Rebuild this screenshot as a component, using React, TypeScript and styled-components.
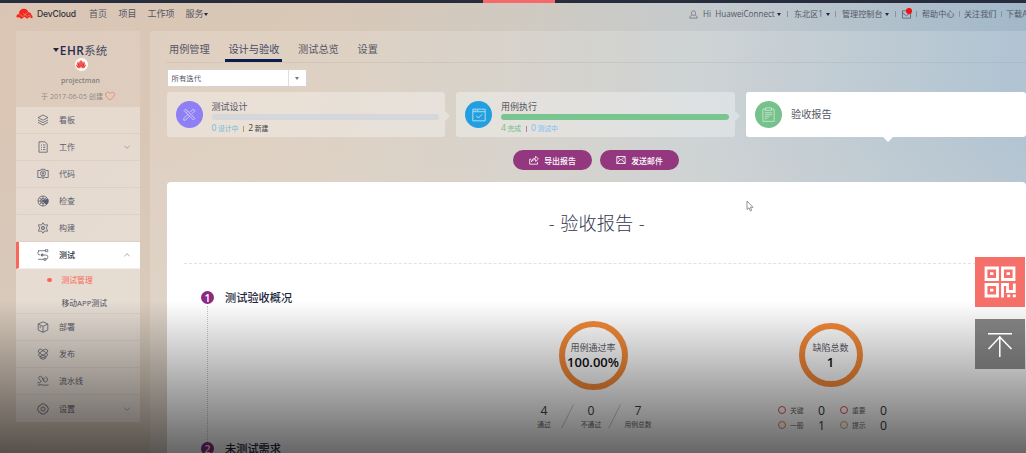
import React from "react";
import styled, { createGlobalStyle } from "styled-components";

const Global = createGlobalStyle`
  *, *::before, *::after { box-sizing: border-box; }
  html, body { margin: 0; height: 100%; overflow: hidden; }
  body { font-family: "Open Sans", "Noto Sans CJK SC", sans-serif; color: #555765; }
`;

const Page = styled.div`
  position: relative;
  width: 1026px;
  height: 453px;
  overflow: hidden;
  background:
    linear-gradient(to bottom, rgba(214, 206, 190, 0) 25%, rgba(214, 206, 196, 0.5) 75%),
    linear-gradient(97deg, #dac5b4 0%, #d9c8b6 28%, #cfcac2 50%, #c4cacd 66%, #aebfcb 84%, #9cb5c9 100%);
`;
const Stripe = styled.div`
  height: 3px;
  background: #282d3d;
  padding-left: 483px;
`;
const StripeMark = styled.div`
  width: 72px;
  height: 3px;
  background: #f5696a;
`;
const Header = styled.header`
  display: flex;
  justify-content: space-between;
  height: 28px;
  padding: 0 0 6px 16px;
  font-size: 9px;
  white-space: nowrap;
`;
const Group = styled.div`
  display: flex;
  align-items: center;
  flex: none;
`;
const Cell = styled.div<{ $w: number; $pl?: number }>`
  display: flex;
  align-items: center;
  flex: none;
  width: ${(p) => p.$w}px;
  padding-left: ${(p) => p.$pl ?? 0}px;
  line-height: 14px;
`;
const Brand = styled(Cell)`
  font-family: Inter, sans-serif;
  font-size: 8.6px;
  font-weight: 500;
  color: #33313a;
  letter-spacing: -0.15px;
`;
const RightGroup = styled(Group)`
  width: 337px;
  font-size: 8.1px;
  overflow: hidden;
`;
const Caret = styled.i<{ $s?: number; $ml?: number; $c?: string }>`
  display: inline-block;
  flex: none;
  margin-left: ${(p) => p.$ml ?? 0}px;
  border: ${(p) => p.$s ?? 2}px solid transparent;
  border-top: ${(p) => (p.$s ?? 2) * 1.6}px solid ${(p) => p.$c ?? "#25283a"};
  border-bottom: 0;
`;
const Bar = styled.i`
  flex: none;
  width: 1px;
  height: 6px;
  background: #8b9299;
`;
const MailCell = styled(Cell)`
  position: relative;
  &::after {
    content: "";
    position: absolute;
    right: 1px;
    top: -1px;
    width: 6px;
    height: 6px;
    border-radius: 50%;
    background: #fb0d0d;
  }
`;

const Body = styled.div`
  display: flex;
  gap: 10px;
  height: 422px;
  padding-left: 16px;
`;
const Side = styled.aside`
  flex: none;
  align-self: flex-start;
  width: 124px;
  background: rgba(255, 255, 255, 0.13);
`;
const Project = styled.div`
  display: flex;
  flex-direction: column;
  align-items: center;
  height: 75.5px;
  padding-top: 11px;
`;
const ProjectName = styled.div`
  display: flex;
  align-items: center;
  gap: 1px;
  height: 16px;
  padding-left: 4px;
  font-size: 11.4px;
  line-height: 16px;
  color: #454a68;
  b { letter-spacing: 0.5px; font-weight: 600; font-size: 11.8px; color: #262c52; }
`;
const Avatar = styled.div`
  display: flex;
  align-items: center;
  justify-content: center;
  margin-left: 6px;
  width: 13px;
  height: 13px;
  border-radius: 50%;
  background: #fff;
`;
const Owner = styled.div`
  margin: 4px 0 0 5px;
  font-size: 7px;
  font-weight: 600;
  line-height: 12px;
  color: #85807e;
`;
const Created = styled.div`
  display: flex;
  align-items: center;
  gap: 2px;
  margin-top: 3px;
  font-size: 7.1px;
  line-height: 12px;
  color: #8f8986;
`;
const MenuItem = styled.div<{ $active?: boolean; $last?: boolean }>`
  display: flex;
  align-items: center;
  height: 27px;
  padding: 0 9px 0 ${(p) => (p.$active ? 18 : 21)}px;
  border-left: ${(p) => (p.$active ? "3px solid #fb6658" : "0")};
  border-bottom: ${(p) => (p.$last ? "0" : "1px solid rgba(160,140,130,0.13)")};
  background: ${(p) => (p.$active ? "#fff" : "rgba(255,255,255,0.25)")};
  color: ${(p) => (p.$active ? "#2b2e44" : "#5b5d6e")};
  font-size: 8px;
  font-weight: ${(p) => (p.$active ? 500 : 400)};
`;
const MenuLabel = styled.span`
  flex: 1;
  margin-left: 10px;
  line-height: 14px;
`;
const SubMenu = styled.div`
  height: 45.5px;
  background: rgba(255, 255, 255, 0.25);
  border-bottom: 1px solid rgba(160, 140, 130, 0.13);
`;
const SubItem = styled.div<{ $on?: boolean }>`
  display: flex;
  align-items: center;
  height: 22.5px;
  padding-left: 31px;
  gap: 10px;
  font-size: 7.8px;
  color: ${(p) => (p.$on ? "#fb6658" : "#4d4e5d")};
  &::before {
    content: "";
    width: 4.5px;
    height: 4.5px;
    border-radius: 50%;
    background: ${(p) => (p.$on ? "#fb6658" : "transparent")};
  }
`;

const Main = styled.main`
  flex: 1;
  min-width: 0;
  padding-left: 16.5px;
  border-radius: 4px 0 0 0;
  background: rgba(255, 255, 255, 0.17);
`;
const Tabs = styled.div`
  display: flex;
  gap: 12.7px;
  height: 32px;
  margin-left: -0.5px;
  padding: 7px 0 0;
  border-bottom: 1px solid rgba(130, 120, 120, 0.13);
`;
const Tab = styled.div<{ $on?: boolean }>`
  height: 24px;
  padding: 0 3px;
  border-bottom: ${(p) => (p.$on ? "3px solid #0c1c4e" : "0")};
  font-size: 10.2px;
  line-height: 22px;
  color: ${(p) => (p.$on ? "#434965" : "#555765")};
`;
const Select = styled.div`
  display: flex;
  width: 140px;
  height: 18px;
  margin-top: 6px;
  border: 1px solid #d8d3ce;
  background: #fff;
  font-size: 7.4px;
  line-height: 17px;
  color: #55565f;
  padding-left: 4px;
`;
const SelectArrow = styled.div`
  display: flex;
  align-items: center;
  justify-content: center;
  width: 18px;
  margin-left: auto;
  border-left: 1px solid #dedede;
`;
const Cards = styled.div`
  display: grid;
  grid-template-columns: 278.5px 279px 280px;
  gap: 11px;
  margin-top: 5px;
`;
const Card = styled.div<{ $on?: boolean }>`
  position: relative;
  display: flex;
  height: 45px;
  padding: ${(p) => (p.$on ? "9px" : "9px 6px 0 9px")};
  border-radius: 3px;
  background: ${(p) => (p.$on ? "#fff" : "rgba(255,255,255,0.33)")};
  &::after {
    content: "";
    position: absolute;
    ${(p) =>
      p.$on
        ? "left: 137px; top: 44.5px; border: 5px solid transparent; border-top: 5px solid #fff; border-bottom: 0;"
        : "left: 100%; top: 19px; border: 5px solid transparent; border-left: 5px solid rgba(255,255,255,0.33); border-right: 0;"}
  }
`;
const Disc = styled.div<{ $c: string }>`
  display: flex;
  align-items: center;
  justify-content: center;
  flex: none;
  width: 27px;
  height: 27px;
  margin-right: 9px;
  border-radius: 50%;
  background: ${(p) => p.$c};
`;
const CardText = styled.div`
  flex: 1;
  margin-top: -2px;
`;
const CardTitle = styled.div<{ $big?: boolean }>`
  font-size: ${(p) => (p.$big ? 10.2 : 9)}px;
  line-height: ${(p) => (p.$big ? 27 : 15)}px;
  color: #555765;
`;
const Progress = styled.div<{ $c: string }>`
  height: 6px;
  border-radius: 3px;
  background: ${(p) => p.$c};
`;
const Stats = styled.div`
  display: flex;
  align-items: center;
  gap: 4.5px;
  margin-top: 2px;
  font-size: 6.8px;
  line-height: 12px;
`;
const Stat = styled.span<{ $c: string }>`
  color: ${(p) => p.$c};
  em { font-style: normal; font-size: 8.6px; margin-right: 1.5px; }
`;
const StatBar = styled.i<{ $c: string }>`
  width: 1px;
  height: 6px;
  background: ${(p) => p.$c};
`;
const Actions = styled.div`
  display: flex;
  gap: 8px;
  margin: 13px 0 0 346.5px;
`;
const Action = styled.button`
  display: flex;
  align-items: center;
  justify-content: center;
  gap: 5px;
  width: 79px;
  height: 20px;
  padding: 0;
  border: 0;
  border-radius: 10px;
  background: #93377f;
  color: #fff;
  font: 500 7.9px "Open Sans", "Noto Sans CJK SC", sans-serif;
`;
const Report = styled.section`
  height: 290px;
  margin-top: 11.5px;
  border-radius: 4px 4px 0 0;
  background: #fff;
`;
const ReportTitle = styled.h1`
  height: 82px;
  margin: 0 0 27px 17px;
  padding: 28px 16px 0 0;
  border-bottom: 1px dashed #e2e2e2;
  font-size: 18.2px;
  font-weight: 300;
  line-height: 27px;
  text-align: center;
  word-spacing: 1px;
  color: #33364f;
`;
const SectionHead = styled.div`
  display: flex;
  align-items: center;
  gap: 11px;
  height: 14px;
  margin-left: 34.5px;
  font-size: 11.2px;
  font-weight: 500;
  line-height: 14px;
  color: #24273a;
`;
const Num = styled.span`
  display: flex;
  align-items: center;
  justify-content: center;
  width: 13px;
  height: 13px;
  border-radius: 50%;
  background: #8b2a82;
  color: #fff;
  font-size: 10.5px;
  font-weight: 600;
`;
const Overview = styled.div`
  display: flex;
  height: 136px;
  margin: 1px 0 0 40.5px;
  padding: 15px 0 0 318px;
  border-left: 1px dotted #c6c6c6;
`;
const Metric = styled.div<{ $w: number; $ml?: number }>`
  display: flex;
  flex-direction: column;
  align-items: center;
  width: ${(p) => p.$w}px;
  margin-left: ${(p) => p.$ml ?? 0}px;
`;
const RingBox = styled.div<{ $ml?: number }>`
  display: flex;
  align-items: center;
  height: 69px;
  margin-left: ${(p) => p.$ml ?? 0}px;
`;
const Ring = styled.div<{ $d: number }>`
  display: flex;
  flex-direction: column;
  align-items: center;
  justify-content: center;
  width: ${(p) => p.$d}px;
  height: ${(p) => p.$d}px;
  padding-top: 1.5px;
  border: 6px solid #f58a38;
  border-radius: 50%;
  font-size: 9px;
  line-height: 14px;
  color: #5a5b66;
  white-space: nowrap;
  b { font-size: 13px; line-height: 15px; color: #0c0c10; font-weight: 600; }
`;
const Triple = styled.div`
  display: flex;
  align-items: flex-start;
  margin-top: 14px;
`;
const Count = styled.div<{ $w: number }>`
  display: flex;
  flex-direction: column;
  align-items: center;
  width: ${(p) => p.$w}px;
  font-size: 6.8px;
  line-height: 14px;
  color: #68686c;
  white-space: nowrap;
  span { font-size: 12.2px; line-height: 14px; color: #3d3d43; }
`;
const Defects = styled.div`
  display: grid;
  grid-template-columns: 62px 47px;
  margin-top: 13px;
  margin-left: 7px;
`;
const Defect = styled.div<{ $c: string }>`
  display: flex;
  align-items: center;
  height: 15px;
  font-size: 6.8px;
  color: #68686c;
  &::before {
    content: "";
    flex: none;
    width: 8px;
    height: 8px;
    margin-right: 4px;
    border: 1.4px solid ${(p) => p.$c};
    border-radius: 50%;
  }
  span { margin-left: auto; width: 7px; margin-right: 15px; font-size: 12.2px; line-height: 15px; color: #34343a; }
  &:nth-child(even) span { margin-right: 0; }
`;
const Shade = styled.div`
  position: absolute;
  left: 0;
  right: 0;
  bottom: 0;
  height: 152px;
  pointer-events: none;
  background: linear-gradient(to bottom, rgba(0, 0, 0, 0), rgba(0, 0, 0, 0.6));
`;
const Floating = styled.div`
  position: absolute;
  left: 975px;
  top: 257px;
  display: grid;
  gap: 12px;
`;
const FloatButton = styled.div<{ $bg: string }>`
  display: flex;
  align-items: center;
  justify-content: center;
  width: 50px;
  height: 50px;
  background: ${(p) => p.$bg};
`;
const Pointer = styled.svg`
  position: absolute;
  left: 746px;
  top: 200px;
`;

const icons: Record<string, React.ReactNode> = {
  board: <><path d="M6 1 11 3.6 6 6.2 1 3.6Z" /><path d="M1 6 6 8.6 11 6M1 8.3 6 11 11 8.3" /></>,
  work: <><path d="M2 .8h6L10.2 3v8.2H2Z" /><path d="M4 4h1M6 4h2.4M4 6.3h1M6 6.3h2.4M4 8.6h1M6 8.6h2.4" /></>,
  code: <><path d="M3.5 2.5H.8v7H4M8.5 2.5h2.7v7H8M3 2.5l1-1.2h4l1 1.2" /><circle cx="6" cy="5.4" r="2.5" /><path d="M5 7.7v2.5h2V7.7M6 4v2.8M4.7 5.2h2.6" /></>,
  check: <><circle cx="6" cy="6" r="5" /><path d="M6 1v10M1 6h10M2.3 2.5l7.4 7M9.7 2.5l-7.4 7" /><circle cx="6" cy="6" r="2.5" /><path d="M6 6 10.8 4A5 5 0 0 1 9.6 9.5Z" fill="currentColor" /></>,
  build: <><path d="M6 .8 7.5 3l3-.2.1.3L9.4 6l1.2 2.9-.1.3-3-.2L6 11.2 4.5 9l-3 .2-.1-.3L2.6 6 1.4 3.1l.1-.3 3 .2Z" /><circle cx="6" cy="6" r="1.7" /><path d="M6 4.2v3.6" /></>,
  test: <><path d="M3 1.7h5.5M3.6 6h5.2M1 10.3h6" /><path d="M3 1.7a2.1 2.1 0 0 0 0 4.3M8.8 6a2.1 2.1 0 0 1 0 4.3" /><path d="M8.5.7h2.3v2H8.5ZM7 9.3h1.8v2H7ZM1 1.7h1M4.5 5h1.4v2H4.5Z" /></>,
  deploy: <><path d="M6 .8 10.8 3v6L6 11.3 1.2 9V3Z" /><path d="M1.2 3 6 5.4 10.8 3M6 5.4v5.8M3.2 5.2v2" /></>,
  release: <><path d="M3.2 1 6 2.4 8.8 1 11 2.8 9.6 5l1 2.2-1.6 1.2v1.4L6 11.4 3 9.8V8.4L1.4 7.2l1-2.2L1 2.8Z" /><path d="M2.4 5 6 2.6 9.6 5 6 7.2ZM3 8.4l3-1.2 3 1.2L6 9.8Z" /></>,
  flow: <path d="M.5 7.8C4.5 8.2 4.5 5.8 3.2 5.1 1 4 1.3 1.3 3.5 1.3 6.2 1.3 5.4 7 8.2 7c2.6 0 3.2-4 .3-5.4M7 2.5v2.8M.7 10.2c3-1.5 7 1 10.8-.3" />,
  setting: <><path d="M4.2 1h3.6l1 1.8h1.3L11.4 6l-1.3 3.2H8.8l-1 1.8H4.2l-1-1.8H1.9L.6 6l1.3-3.2h1.3Z" /><path d="M4.9 4.1h2.2L8.2 6 7.1 7.9H4.9L3.8 6Z" /></>,
  tools: <><path d="m1 2.4 1.4-1.4 8.6 8.6-1.4 1.4Z" /><path d="M9.4 1 11 2.6 8.2 5.4M6.4 7.2l-4 4-1.7.1.1-1.7 4-4M6.6 3.8 9.4 1M3 4.3 4.3 3" /></>,
  panel: <><path d="M.7 1h10.6v10H.7ZM.7 3.2h10.6M2.2 2.1h1M4.3 2.1h1M3.7 6.6 5.5 8.6 8.6 5.3" /></>,
  clip: <><path d="M3.6 1.7H1.5v9.8h9V1.7H8.4M3.6.7h4.8v2H3.6ZM3 4.6h6M3 6.2h6M3 7.8h3.6M3 9.3h2" /></>,
  share: <path d="M2.6 5H.8v6h9.4V8.6M2.8 8.2C3.2 5.2 5.2 3.8 8 3.8V1.5L11.3 4.8 8 7.8V5.6C5.8 5.5 4.3 6 2.8 8.2Z" />,
  mail: <path d="M1 1.8h10v8.4H1ZM1.2 2 6 6.2 10.8 2M1.2 10l3.4-4M10.8 10 7.4 6" />,
  inbox: <path d="M1.6 2h8.8v8H1.6ZM1.2 4 6 7.4 10.8 4" />,
  user: <><path d="M6 1.2c1.7 0 2.8 1.2 2.8 2.9 0 1.5-1 3-2.8 3S3.2 5.6 3.2 4.1C3.2 2.4 4.3 1.2 6 1.2Z" /><path d="M3.8 6.6C2.2 7.2 1.2 8.6 1 10.8h10c-.2-2.2-1.2-3.6-2.8-4.2" /></>,
  heart: <path d="M6 10.8C3 8.6.7 6.6.7 4.2.7 1.3 4.4.3 6 3.1 7.6.3 11.3 1.3 11.3 4.2c0 2.4-2.3 4.4-5.3 6.6Z" />,
  up: <path d="M2 8 6 4l4 4" />,
  down: <path d="M2 4l4 4 4-4" />,
};

const IconSvg = styled.svg`
  flex: none;
`;

const Icon = ({ name, size = 12, color = "currentColor", weight = 0.8 }: { name: string; size?: number; color?: string; weight?: number }) => (
  <IconSvg width={size} height={size} viewBox="0 0 12 12" fill="none" stroke={color} color={color} strokeWidth={weight} strokeLinejoin="round">
    {icons[name]}
  </IconSvg>
);

const CloudLogo = () => (
  <svg width="17" height="12" viewBox="0 0 17 12">
    <path d="M.4 9.2C.3 7.3 1.5 6.1 3.2 6.1 2.6 2.8 5.2.4 8.1.7c2.2.1 3.8 1.5 4.2 3.5 1.8-.2 2.9.8 2.9 2.6 1.2.6 1.8 2.2 1 3.6L13.6 9 11 10.7 8.6 8.8 5.4 10.9 3.7 9.5Z" fill="#f32620" />
    <path d="M3.5 6.5 6.8 8.5 11.8 4.4M7 5.2l4.6 3.6M12 7.2l3 1.2" stroke="#e2a090" strokeWidth=".6" fill="none" />
  </svg>
);

const Petals = () => (
  <svg width="10" height="9" viewBox="0 0 9 8" fill="#ed2f28" stroke="#ed2f28" strokeWidth=".3">
    <path d="M4.3 6.6C2.5 4 2.5 1.6 4.2.4ZM4.7 6.6C6.5 4 6.5 1.6 4.8.4ZM3.8 6.8C1.5 5.5.5 3.4 1.7 1.5 2.6 3 3.2 5 3.8 6.8ZM5.2 6.8C7.5 5.5 8.5 3.4 7.3 1.5 6.4 3 5.8 5 5.2 6.8ZM3.6 7.2C1.5 7.4.3 6 .3 4.2 1.4 5.2 2.4 6.2 3.6 7.2ZM5.4 7.2C7.5 7.4 8.7 6 8.7 4.2 7.6 5.2 6.6 6.2 5.4 7.2Z" />
  </svg>
);

const Slash = () => (
  <svg width="13" height="25" viewBox="0 0 13 25"><path d="M.5 24.5 12.5.5" stroke="#b2b2b2" strokeWidth=".7" /></svg>
);

const menuTop = [
  ["board", "看板", ""], ["work", "工作", "down"], ["code", "代码", ""], ["check", "检查", ""], ["build", "构建", ""],
];
const menuBottom = [
  ["deploy", "部署", ""], ["release", "发布", ""], ["flow", "流水线", ""], ["setting", "设置", "down"],
];

const Menu = ({ icon, label, arrow, active, last }: { icon: string; label: string; arrow: string; active?: boolean; last?: boolean }) => (
  <MenuItem $active={active} $last={last}>
    <Icon name={icon} color="#5b5e6e" />
    <MenuLabel>{label}</MenuLabel>
    {arrow && <Icon name={arrow} size={8} color="#8d8c98" weight={1.1} />}
  </MenuItem>
);

export default function App() {
  return (
    <Page>
      <Global />
      <Stripe><StripeMark /></Stripe>
      <Header>
        <Group>
          <Cell $w={21}><CloudLogo /></Cell>
          <Brand $w={52}>DevCloud</Brand>
          <Cell $w={29.5}>首页</Cell>
          <Cell $w={29}>项目</Cell>
          <Cell $w={38}>工作项</Cell>
          <Cell $w={30}>服务<Caret /></Cell>
        </Group>
        <RightGroup>
          <Cell $w={14}><Icon name="user" size={9} /></Cell>
          <Cell $w={84}>Hi&nbsp; HuaweiConnect<Caret $ml={2} /></Cell>
          <Bar />
          <Cell $w={47} $pl={6}>东北区1<Caret $ml={3} /></Cell>
          <Bar />
          <Cell $w={59} $pl={6}>管理控制台<Caret $ml={3} /></Cell>
          <Bar />
          <MailCell $w={17} $pl={5}><Icon name="inbox" size={11} /></MailCell>
          <Cell $w={3} />
          <Bar />
          <Cell $w={42} $pl={5}>帮助中心</Cell>
          <Bar />
          <Cell $w={41} $pl={4}>关注我们</Cell>
          <Bar />
          <Cell $w={42} $pl={4}>下载A</Cell>
        </RightGroup>
      </Header>
      <Body>
        <Side>
          <Project>
            <ProjectName><Caret $s={3} /><span><b>EHR</b>系统</span></ProjectName>
            <Avatar><Petals /></Avatar>
            <Owner>projectman</Owner>
            <Created>于 2017-06-05 创建<Icon name="heart" size={10} color="#f4695f" /></Created>
          </Project>
          {menuTop.map(([i, l, a]) => <Menu key={l} icon={i} label={l} arrow={a} />)}
          <Menu icon="test" label="测试" arrow="up" active />
          <SubMenu>
            <SubItem $on>测试管理</SubItem>
            <SubItem>移动APP测试</SubItem>
          </SubMenu>
          {menuBottom.map(([i, l, a], n) => <Menu key={l} icon={i} label={l} arrow={a} last={n === 3} />)}
        </Side>
        <Main>
          <Tabs>
            <Tab>用例管理</Tab><Tab $on>设计与验收</Tab><Tab>测试总览</Tab><Tab>设置</Tab>
          </Tabs>
          <Select>所有迭代<SelectArrow><Caret $c="#77777c" /></SelectArrow></Select>
          <Cards>
            <Card>
              <Disc $c="#8f7ff5"><Icon name="tools" size={13} color="#d9d3ff" /></Disc>
              <CardText>
                <CardTitle>测试设计</CardTitle>
                <Progress $c="#d6d7dc" />
                <Stats>
                  <Stat $c="#6dbbe2"><em>0</em>设计中</Stat><StatBar $c="#c99559" /><Stat $c="#3f3f46"><em>2</em>新建</Stat>
                </Stats>
              </CardText>
            </Card>
            <Card>
              <Disc $c="#229fe0"><Icon name="panel" size={14} color="#b5e0f8" /></Disc>
              <CardText>
                <CardTitle>用例执行</CardTitle>
                <Progress $c="#79c58f" />
                <Stats>
                  <Stat $c="#6fc084"><em>4</em>完成</Stat><StatBar $c="#a98693" /><Stat $c="#78bdf0"><em>0</em>测试中</Stat>
                </Stats>
              </CardText>
            </Card>
            <Card $on>
              <Disc $c="#76c18c"><Icon name="clip" size={15} color="#cdebd5" weight={0.65} /></Disc>
              <CardTitle $big>验收报告</CardTitle>
            </Card>
          </Cards>
          <Actions>
            <Action><Icon name="share" size={10} weight={1} />导出报告</Action>
            <Action><Icon name="mail" size={10} weight={1} />发送邮件</Action>
          </Actions>
          <Report>
            <ReportTitle>- 验收报告 -</ReportTitle>
            <SectionHead><Num>1</Num>测试验收概况</SectionHead>
            <Overview>
              <Metric $w={130}>
                <RingBox $ml={4}><Ring $d={69}>用例通过率<b>100.00%</b></Ring></RingBox>
                <Triple>
                  <Count $w={34}><span>4</span>通过</Count><Slash />
                  <Count $w={34}><span>0</span>不通过</Count><Slash />
                  <Count $w={34}><span>7</span>用例总数</Count>
                </Triple>
              </Metric>
              <Metric $w={110} $ml={118}>
                <RingBox $ml={3}><Ring $d={64}>缺陷总数<b>1</b></Ring></RingBox>
                <Defects>
                  <Defect $c="#e14d50">关键<span>0</span></Defect>
                  <Defect $c="#e14d50">重要<span>0</span></Defect>
                  <Defect $c="#df8548">一般<span>1</span></Defect>
                  <Defect $c="#d9a26c">提示<span>0</span></Defect>
                </Defects>
              </Metric>
            </Overview>
            <SectionHead><Num>2</Num>未测试需求</SectionHead>
          </Report>
        </Main>
      </Body>
      <Shade />
      <Floating>
        <FloatButton $bg="#f6706a">
          <svg width="32" height="32" viewBox="0 0 32 32" fill="none" stroke="#fff" strokeWidth="2.8">
            <path d="M2 2h11.5v11.5H2ZM18.5 2H30v11.5H18.5ZM2 18.5h11.5V30H2Z" />
            <path d="M18.5 31.5V18.5h5v7h6.8v-8" />
            <path d="M6 7.7h3.4M22.6 7.7H26M6 24.2h3.4M23.2 29.8h3M28.8 29.8h3" />
          </svg>
        </FloatButton>
        <FloatButton $bg="linear-gradient(#7f7f7f, #6a6a6a)">
          <svg width="26" height="26" viewBox="0 0 26 26" fill="none" stroke="#fff" strokeWidth="1.5">
            <path d="M1 2.7h24M12.8 5v21M1.5 18 12.8 6 24.5 18" />
          </svg>
        </FloatButton>
      </Floating>
      <Pointer width="8" height="12" viewBox="0 0 8 12"><path d="M1 1v8.5l2-1.7L4.3 11l1.4-.6L4.4 7.3H7Z" fill="#fff" stroke="#77787f" strokeWidth=".8" /></Pointer>
    </Page>
  );
}
